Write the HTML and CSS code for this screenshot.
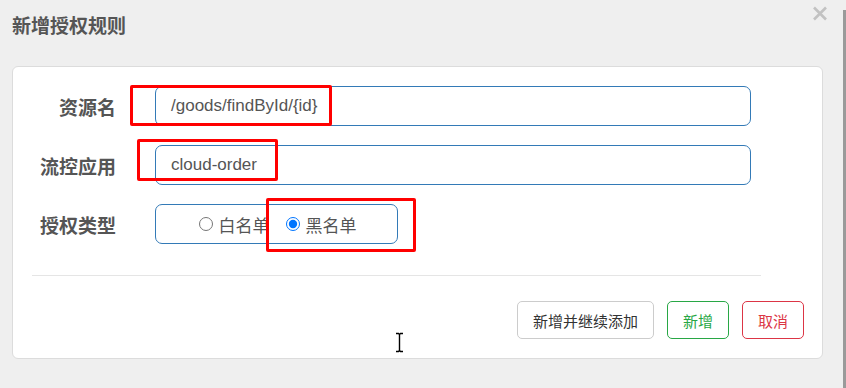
FILE: index.html
```html
<!DOCTYPE html>
<html lang="zh-CN">
<head>
    <meta charset="UTF-8">
    <title>新增授权规则</title>
    <link rel="stylesheet" href="styles.css">
</head>
<body>
    <div class="page">
        <header class="dialog-header">
            <h4 class="dialog-title">新增授权规则</h4>
            <span class="close-btn">
                <svg width="16" height="15" viewBox="0 0 16 15">
                    <path d="M2 1.5 L14 13.5 M14 1.5 L2 13.5" stroke="#c2c2c2" stroke-width="2.6" fill="none"/>
                </svg>
            </span>
        </header>

        <div class="card">
            <div class="form-row">
                <label class="form-label">资源名</label>
                <div class="form-input">/goods/findById/{id}</div>
            </div>
            <div class="form-row">
                <label class="form-label">流控应用</label>
                <div class="form-input">cloud-order</div>
            </div>
            <div class="form-row">
                <label class="form-label">授权类型</label>
                <div class="radio-group">
                    <label class="radio-item"><input type="radio" name="strategy">白名单</label>
                    <label class="radio-item"><input type="radio" name="strategy" checked>黑名单</label>
                </div>
            </div>

            <div class="divider"></div>

            <div class="actions">
                <button class="btn btn-default">新增并继续添加</button>
                <button class="btn btn-success">新增</button>
                <button class="btn btn-danger">取消</button>
            </div>
        </div>

        <!-- annotation boxes -->
        <div class="mark mark-1"></div>
        <div class="mark mark-2"></div>
        <div class="mark mark-3"></div>

        <svg class="text-cursor" width="9" height="21" viewBox="0 0 9 21">
            <path d="M1 1.5 H3.5 L4.5 2.5 L5.5 1.5 H8 M4.5 2.5 V18.5 M1 19.5 H3.5 L4.5 18.5 L5.5 19.5 H8" stroke="#000" stroke-width="1.4" fill="none"/>
        </svg>

        <div class="edge-strip"></div>
    </div>
</body>
</html>
```

FILE: styles.css
```css
* {
    margin: 0;
    padding: 0;
    box-sizing: border-box;
}

body {
    background-color: #efefef;
    font-family: 'Liberation Sans', 'Noto Sans CJK SC', sans-serif;
    color: #555;
}

.page {
    position: relative;
    width: 846px;
    height: 388px;
    overflow: hidden;
}

/* Header */
.dialog-header {
    display: flex;
    justify-content: space-between;
    align-items: flex-start;
    height: 66px;
    padding: 12px 18px 0 12px;
}

.dialog-title {
    font-family: 'Noto Sans CJK SC', sans-serif;
    font-size: 19px;
    line-height: 26px;
    font-weight: bold;
    color: #555;
}

.close-btn {
    display: block;
    margin-top: -6px;
    line-height: 0;
}

/* Card */
.card {
    margin: 0 23px 0 12px;
    height: 293px;
    background: #fff;
    border: 1px solid #dcdcdc;
    border-radius: 6px;
    padding: 19px 0 19px 0;
}

.form-row {
    display: flex;
    align-items: center;
    margin-bottom: 19px;
}

.form-row:last-of-type {
    margin-bottom: 0;
}

.form-label {
    width: 103px;
    margin-right: 39px;
    text-align: right;
    font-family: 'Noto Sans CJK SC', sans-serif;
    font-size: 19px;
    font-weight: bold;
    color: #555;
}

.form-input {
    width: 596px;
    height: 40px;
    border: 1px solid #337ab7;
    border-radius: 7px;
    padding: 0 15px;
    display: flex;
    align-items: center;
    font-size: 17px;
    color: #555;
}

.radio-group {
    width: 243px;
    height: 40px;
    border: 1px solid #337ab7;
    border-radius: 7px;
    display: flex;
    justify-content: center;
    align-items: center;
    gap: 16px;
    padding-left: 2px;
    font-family: 'Noto Sans CJK SC', sans-serif;
    font-size: 17px;
    color: #555;
}

.radio-item {
    display: flex;
    align-items: center;
    gap: 6px;
}

.radio-item input {
    margin: 0;
    width: 14px;
    height: 14px;
}

.divider {
    height: 1px;
    background: #e5e5e5;
    margin: 31px 61px 25px 19px;
}

.actions {
    display: flex;
    justify-content: flex-end;
    gap: 13px;
    padding-right: 18px;
}

.btn {
    height: 38px;
    padding: 0 15px;
    background: #fff;
    border: 1px solid #ccc;
    border-radius: 5px;
    font-family: 'Noto Sans CJK SC', sans-serif;
    font-size: 15px;
    color: #333;
}

.btn-success {
    border-color: #28a745;
    color: #28a745;
}

.btn-danger {
    border-color: #dc3545;
    color: #dc3545;
}

/* Red annotation boxes drawn over the form */
.mark {
    position: absolute;
    border: 3px solid #ff0000;
    border-radius: 2px;
}

.mark-1 {
    left: 130px;
    top: 85px;
    width: 202px;
    height: 41px;
}

.mark-2 {
    left: 137px;
    top: 139px;
    width: 141px;
    height: 42px;
}

.mark-3 {
    left: 266px;
    top: 198px;
    width: 150px;
    height: 54px;
}

.text-cursor {
    position: absolute;
    left: 395px;
    top: 332px;
}

.edge-strip {
    position: absolute;
    right: 0;
    top: 10px;
    bottom: 0;
    width: 3px;
    background: #9a9a9a;
}
```
